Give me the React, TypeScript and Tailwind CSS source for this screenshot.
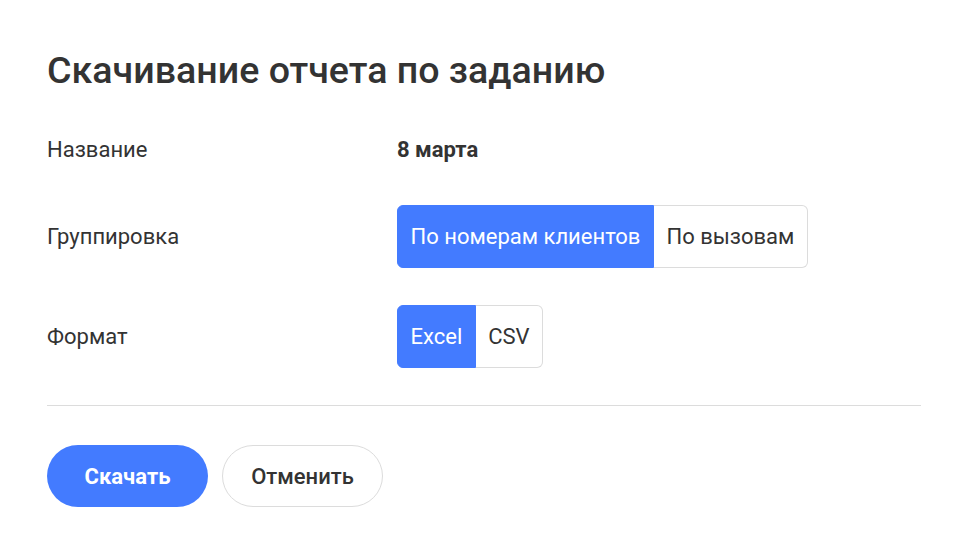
import { useState } from 'react'

const font = { fontFamily: 'Roboto, "Noto Sans", sans-serif' }

function Segmented({ options, value, onChange }: { options: string[]; value: string; onChange: (v: string) => void }) {
  return (
    <div className="flex h-[63px]">
      {options.map((o, i) => {
        const active = o === value
        const first = i === 0
        const last = i === options.length - 1
        return (
          <button
            key={o}
            onClick={() => onChange(o)}
            className={
              'px-[12.5px] text-[22px] leading-none border ' +
              (active ? 'bg-[#437bff] border-[#437bff] text-white ' : 'bg-white border-[#dcdcdc] text-[#333] ') +
              (first ? 'rounded-l-[6px] ' : 'border-l-0 ') +
              (last ? 'rounded-r-[6px]' : '')
            }
          >
            {o}
          </button>
        )
      })}
    </div>
  )
}

export default function App() {
  const [group, setGroup] = useState('По номерам клиентов')
  const [format, setFormat] = useState('Excel')

  return (
    <div className="min-h-screen bg-white px-[47px] text-[#333]" style={font}>
      <h1 className="pt-[48px] text-[37.6px] leading-[44px] font-medium">Скачивание отчета по заданию</h1>

      <div className="mt-[45px] flex items-center h-[24px] text-[22px]">
        <div className="w-[350px]">Название</div>
        <div className="font-bold">8 марта</div>
      </div>

      <div className="mt-[44px] flex items-center text-[22px]">
        <div className="w-[350px]">Группировка</div>
        <Segmented options={['По номерам клиентов', 'По вызовам']} value={group} onChange={setGroup} />
      </div>

      <div className="mt-[37px] flex items-center text-[22px]">
        <div className="w-[350px]">Формат</div>
        <Segmented options={['Excel', 'CSV']} value={format} onChange={setFormat} />
      </div>

      <div className="mt-[37px] h-px bg-[#dcdcdc]" />

      <div className="mt-[39px] flex gap-[14px]">
        <button className="w-[161px] h-[62px] rounded-full bg-[#437bff] text-white text-[22px] font-bold">Скачать</button>
        <button className="w-[161px] h-[62px] rounded-full border border-[#dcdcdc] bg-white text-[#333] text-[22px] font-medium">Отменить</button>
      </div>
    </div>
  )
}
